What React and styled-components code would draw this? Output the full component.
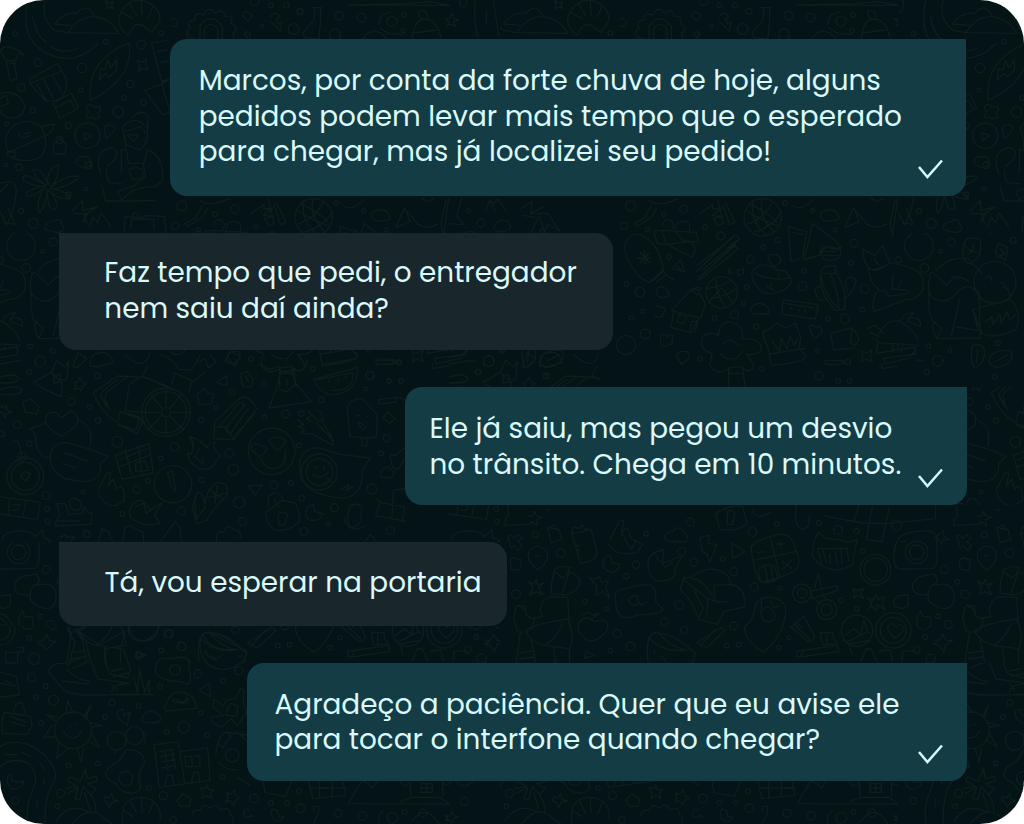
import React from "react";
import styled, { createGlobalStyle } from "styled-components";

const GlobalStyle = createGlobalStyle`
  body { margin: 0; background: #ffffff; }
`;

const Screen = styled.main`
  display: grid;
  width: 1024px;
  height: 824px;
  overflow: hidden;
  border-radius: 44px;
  background: #041316;
`;

const Wallpaper = styled.svg`
  grid-area: 1 / 1;
  width: 1024px;
  height: 824px;
  fill: none;
  stroke: #0e1e1f;
  stroke-width: 4;
  stroke-linecap: round;
  stroke-linejoin: round;
`;

const Thread = styled.section`
  grid-area: 1 / 1;
  z-index: 1;
  display: flex;
  flex-direction: column;
  gap: 37px;
  box-sizing: border-box;
  padding: 39.3px 57.3px 0 59px;
`;

const Bubble = styled.article`
  display: flex;
  justify-content: space-between;
  box-sizing: border-box;
  width: ${(p) => p.$width}px;
  height: ${(p) => p.$height}px;
  margin-right: ${(p) => p.$inset || 0}px;
  align-self: ${(p) => (p.$sent ? "flex-end" : "flex-start")};
  padding: ${(p) => p.$top}px ${(p) => 24 - (p.$inset || 0)}px 17px ${(p) => p.$left}px;
  border-radius: ${(p) => (p.$sent ? "17px 0 17px 17px" : "0 17px 17px 17px")};
  background: ${(p) => (p.$sent ? "#143c44" : "#19262b")};
`;

const Message = styled.p`
  margin: 0;
  color: #d9f9fc;
  font-family: Poppins, Inter, "Open Sans", sans-serif;
  font-size: 27.88px;
  font-weight: 400;
  line-height: 35.7px;
  white-space: nowrap;
`;

const Line = styled.span`
  display: block;
`;

const Check = styled.svg`
  flex: none;
  align-self: flex-end;
  width: 25px;
  height: 20px;
  fill: none;
  stroke: #d3f8fb;
  stroke-width: 2.5;
`;

const messages = [
  {
    sent: true, width: 796, height: 157, top: 23.6, left: 29, inset: 1,
    lines: [
      "Marcos, por conta da forte chuva de hoje, alguns",
      "pedidos podem levar mais tempo que o esperado",
      "para chegar, mas já localizei seu pedido!",
    ],
  },
  {
    sent: false, width: 554, height: 117, top: 21.6, left: 45.3,
    lines: ["Faz tempo que pedi, o entregador", "nem saiu daí ainda?"],
  },
  {
    sent: true, width: 561.5, height: 117.5, top: 23.8, left: 24.3,
    lines: ["Ele já saiu, mas pegou um desvio", "no trânsito. Chega em 10 minutos."],
  },
  {
    sent: false, width: 448, height: 84, top: 23.6, left: 45.5,
    lines: ["Tá, vou esperar na portaria"],
  },
  {
    sent: true, width: 720, height: 118, top: 23.8, left: 27.8,
    lines: ["Agradeço a paciência. Quer que eu avise ele", "para tocar o interfone quando chegar?"],
  },
];

// Each sheet of doodles is drawn at three times its size, from its own origin.
const sheets = [
  {
    at: [0, 0],
    dots: [[317,125,7],[114,188,11],[246,204,14],[424,134,13],[64,262,11],[243,270,6],[391,252,11],[430,307,8],[98,330,8],[355,336,16],[372,294,7],[262,407,38],[205,377,9],[57,502,10],[265,496,10],[18,495,5],[258,567,5],[205,584,8],[63,633,8],[100,670,15],[407,645,8],[46,102,7],[484,100,7],[20,372,6],[178,420,10]],
    paths: [
      "M84 0Q58 110 130 154Q220 205 292 132M136 0Q120 52 163 91L204 98M98 50Q104 102 139 127M150 140Q190 165 238 144",
      "M204 98Q235 48 284 50Q334 58 356 100ZM164 72Q188 36 230 40Q262 4 284 50M164 72L214 76",
      "M385 107Q343 75 362 38Q390 -12 440 5Q482 26 480 62L455 98L435 82Q408 55 385 107M365 37L398 55M390 12L410 48M424 2L426 45M460 15L444 53",
      "M271 301Q257 180 388 128Q402 240 271 301M298 239L301 207L316 209L322 181L333 203L349 180L349 211L327 231L318 220L298 239",
      "M411 180L426 187L439 178L436 196L445 208L426 207L416 214L419 197ZM316 0L328 10L341 5L335 16L342 25L328 21L319 27L321 14Z",
      "M89 237L172 191L190 220Q214 262 180 298L139 305L91 252ZM94 249L185 213M111 253L139 302M132 239L159 294M157 225L184 275M160 309L214 279L236 324L179 355ZM169 322L211 301L225 324",
      "M0 151Q26 124 72 165L55 160L47 180L20 183L0 151M19 186L31 242L51 235L40 180M34 190L48 191",
      "M0 280Q58 267 75 320Q66 360 25 353Q0 342 0 330M0 296L19 286L25 310L0 320",
      "M24 452Q5 410 40 378Q80 350 123 379Q151 434 123 470Q85 492 34 474M17 462L144 403M125 379Q150 372 164 374Q158 388 142 405M57 396Q57 424 89 407M70 402L92 398M24 454L45 456L47 470L23 468Z",
      "M262 316Q276 310 281 321Q306 317 301 333Q288 340 300 352Q282 362 274 351Q257 360 260 343L267 334Q254 326 262 316M251 398L254 421L276 406Z",
      "M313 380Q328 369 345 381Q348 392 318 416ZM230 481Q240 462 250 472Q274 464 270 482Q282 500 262 500Q246 508 240 498Q222 490 230 481M160 432L180 417L199 433L195 462L161 462Z",
      "M139 557Q104 530 98 511Q124 500 142 549Q142 506 175 494Q176 534 155 559Q190 528 226 528Q250 531 215 548Q190 564 158 566Q196 576 209 590Q221 603 178 592Q160 586 151 574Q172 600 171 623Q163 636 147 619L140 576Q138 616 119 640Q106 610 130 567Q98 590 78 588Q76 568 129 560Q92 558 72 541Q61 524 87 528ZM131 558L145 550L156 562L143 575Z",
      "M367 382Q403 340 441 382Q449 433 416 450L379 434ZM376 395L421 380L437 397M397 353Q424 322 444 350L443 388M381 405L416 404L402 424ZM376 432L386 490L432 489L442 450M362 450L376 450M442 450Q490 462 488 540Q465 568 443 559L399 571L364 600L354 575L402 557L437 529L430 493M364 450L364 519M303 522Q276 453 335 442Q362 452 345 478L322 500M319 510Q320 540 330 548L364 551M385 508Q405 498 428 508L429 536L397 539ZM306 558L318 603L465 602",
      "M453 130L500 121M455 131L485 243L506 238M472 155L503 149M480 187L506 183M434 271L486 252L510 338L488 344ZM485 250L510 238",
      "M0 550Q55 530 48 585Q42 636 20 675L0 634M0 577L24 552M25 625L45 673L13 668M14 0Q22 34 0 38",
      "M216 633L247 602L250 631L292 620L252 646L260 670M221 641L263 641L248 665M267 682L280 650L292 668L304 639L332 680M372 694L375 650L425 654L440 646L493 650L498 695M392 684L394 658L461 658L462 690M135 688Q134 666 160 665Q178 648 187 675Q202 693 171 698Z",
    ],
  },
  {
    at: [160, 0],
    dots: [[284,4,13],[332,16,7],[379,16,8],[401,87,16],[307,78,5],[420,34,9],[538,47,13],[605,53,13],[525,104,17],[732,44,7],[730,92,6],[910,8,11],[263,103,8],[696,64,15],[40,68,12]],
    paths: [
      "M100 116Q80 112 81 101Q78 92 92 84Q74 64 105 60Q100 34 131 45Q147 14 166 40Q190 20 195 49Q222 44 214 72Q240 82 218 102L222 116M120 116V78Q152 33 187 79V116M133 116V86Q153 60 174 86V116",
      "M246 47L257 34L277 45L265 64ZM331 50Q345 31 359 49L349 59L355 72L367 64L361 92L332 65M465 22L461 62L429 99L434 112L476 118L481 75L482 24M456 23H485",
      "M565 15L870 16L807 5L737 11L565 15ZM655 74L666 44L690 37M660 84L687 101L729 102M610 115Q640 70 680 116M757 115Q763 55 797 57Q830 60 844 114M762 99L828 90M776 36Q800 22 802 54Q780 68 776 36M856 57L869 56L875 40L883 58L897 58L881 67L888 80L873 73L862 76L868 66ZM945 0Q940 70 955 115M1001 0Q1010 75 1018 110M980 32L978 75",
    ],
  },
  {
    at: [600, 180],
    dots: [[92,78,15],[192,102,7],[251,87,12],[72,138,11],[143,149,6],[315,142,7],[488,112,56],[555,70,7],[638,92,6],[533,180,7],[490,202,7],[362,168,12],[451,238,11],[207,230,7],[762,190,12],[753,249,7],[705,150,6],[990,129,12],[953,92,6],[1054,186,12],[1022,214,6],[896,239,9],[957,198,43],[973,264,13],[612,273,7],[607,318,13],[440,322,7],[365,337,47],[119,336,14],[79,313,7],[128,394,6],[95,413,7],[136,462,15],[344,414,7],[403,404,12],[430,370,6],[469,440,8],[794,327,13],[787,388,7],[734,416,14],[683,416,7],[652,512,5],[657,587,13],[714,603,7],[749,603,7],[743,546,8],[485,566,7],[300,537,7],[985,499,7],[1013,543,16],[980,576,8],[1050,511,6],[1194,490,7],[1184,590,7],[1240,181,9],[1185,307,63],[1174,153,7],[78,495,29]],
    paths: [
      "M146 61Q178 85 234 55M155 75L134 113L102 131L111 139L155 111L169 85M300 101L338 74L339 87L366 84L336 107L368 109L340 116L354 136L370 131L352 56M377 69L405 127L389 134L369 74",
      "M450 73Q500 93 532 127M436 90Q490 125 534 137M459 61Q448 127 499 163M488 54Q470 100 521 156M443 132Q489 117 518 67M463 155Q520 140 544 95",
      "M565 140L620 155L608 231L573 245ZM578 157L611 164M612 240L638 130L708 183L723 204L701 207L666 196L659 225L612 240M665 225Q661 192 710 205L721 211Q730 241 687 241Q664 239 665 225M668 214H710M670 226H716",
      "M578 78Q605 95 639 58M662 110Q658 92 682 91Q704 84 713 104Q728 121 691 123Q667 126 662 110M734 143L761 82L777 125L734 143M769 95L801 133Q835 150 861 131M813 55L830 66L848 56M893 55L878 166L870 133L885 60M932 54L917 106L936 134L895 131",
      "M1005 91L1016 59L1029 71L1040 57L1067 94M1015 60L1033 92M1028 147Q1034 118 1060 121Q1077 120 1079 142Q1055 165 1028 147M1110 85L1142 65L1141 96L1180 80L1137 101L1190 100L1226 153L1190 132L1181 158L1165 108L1141 156M1114 106L1155 112",
      "M82 176Q98 160 121 164Q179 190 190 269L150 307Q120 300 106 275Q59 215 82 176M133 210L135 254M112 235H151M120 216L149 249M147 219L120 248M158 303L190 273L198 284L220 299M169 307L198 285M217 266L242 240L255 275ZM232 258L247 274",
      "M161 152L185 151L199 193L171 190ZM185 151L289 157L295 186L248 182L225 151M189 136Q188 118 207 119Q230 130 215 148M226 149Q225 120 256 124Q273 128 268 151M201 193L274 231Q296 211 274 185L201 193",
      "M288 276L399 169Q418 164 417 179L292 300M292 256L393 177M297 292L404 197L416 205L299 300M305 273L411 181M385 265L396 278L386 281ZM413 270L431 266L430 281L414 288Z",
      "M456 275Q487 237 530 270Q569 269 574 308Q544 350 490 338Q451 307 456 275M461 278Q520 306 569 293M503 235Q510 218 531 225Q556 239 523 261L503 235M484 288L489 293M514 310L514 329M534 280L537 290M500 320L523 331",
      "M331 356Q377 350 410 325M321 325Q366 321 394 300M350 297Q344 337 375 378M325 369L365 323L399 369",
      "M271 331L215 392L302 414L316 371L292 327ZM222 391L212 442L275 458L295 414M275 331L293 345L302 325Q292 316 275 331M236 404L260 410L252 431L231 425ZM270 451L275 424L295 424L284 456",
      "M450 391Q465 359 499 377Q510 389 506 402H459ZM550 359L655 374L646 417L545 402ZM556 370L642 384M572 382L576 389M594 387L599 394M613 390L619 397",
      "M665 280Q661 253 707 258L705 281L665 280M663 286Q676 354 715 384M690 278Q716 336 717 389M707 278Q743 329 733 389L706 391Q654 334 663 286M733 357Q765 332 769 300Q747 278 736 309L742 336M661 319Q644 321 645 334Q660 377 681 354",
      "M788 208L825 227L848 196L868 244Q870 256 825 272Q793 268 788 208M868 248Q928 256 962 280Q974 300 968 332Q950 360 919 358L821 395Q813 350 837 331Q862 330 866 348Q900 348 928 336M806 267Q808 296 820 312L838 331M880 284L875 327L922 331M903 303L896 322M825 240L836 255M816 271L850 259M1092 189Q1103 164 1143 180L1140 224L1113 252Q1080 247 1092 189M1094 195L1114 218L1121 195M1106 224L1113 209L1135 219",
      "M1009 272Q1044 229 1103 235L1147 282M991 279Q998 271 1039 317L1061 291Q1090 290 1107 305M991 279Q974 347 1007 357Q1041 377 1073 334Q1105 305 1137 339L1141 474L1010 476Q987 432 1009 424M987 334Q984 415 1003 427L1024 445L1010 476M1079 359L1054 467M1118 391L1135 451L1068 441M1211 321Q1237 330 1226 361M1156 294Q1172 280 1176 304M1202 307L1216 315M1118 389L1231 359Q1268 397 1248 449Q1176 481 1146 459L1118 389M1156 426L1176 410L1178 433L1201 402L1203 432L1222 394L1228 419L1248 404",
      "M169 378L198 386L184 412L164 409M181 473Q184 454 201 470Q225 453 216 478Q220 496 205 495Q180 506 182 478M229 529Q233 510 253 515Q267 510 268 535L245 553ZM173 339Q164 323 183 320Q204 322 208 347Q185 360 170 345M355 467Q359 422 396 426Q433 440 427 476Q488 472 483 512Q467 526 439 523Q482 568 439 573L422 559L388 564Q347 591 329 553L337 520Q294 511 308 469Q331 450 355 467M370 490Q394 471 416 497M361 520Q376 541 399 535M427 515L404 541M386 562V620M427 562L435 620M387 580H425",
      "M490 455L509 446L531 429L556 444L587 430L602 470L598 506L618 526Q623 545 514 557L503 499Q488 473 490 455M511 522L615 505M517 485L540 515L543 474L561 507L570 467L583 496L593 473M644 476Q620 436 633 434L652 443L662 437L667 456ZM692 460L751 444Q771 449 776 480L762 504L701 510ZM755 450L751 488L763 495",
      "M803 445L826 436L850 460M810 457L837 469M816 474L834 482L829 520L945 501L947 522L850 535L855 551L927 535L948 509M835 488L957 496M835 467Q857 414 899 424Q945 450 953 482M902 425Q908 397 941 399L923 418Q964 403 961 439L923 423M877 495L881 515M893 493L894 510M903 516L910 493M951 542L971 543M845 550L846 566L892 558",
      "M784 513L799 521L815 510L810 529L817 544L797 537L785 546L789 530ZM675 541H729Q736 549 722 553H676ZM1118 496Q1161 486 1152 533Q1143 562 1122 563Q1107 535 1118 496M1133 508L1129 547M1168 541Q1174 507 1233 512Q1248 550 1193 562Q1170 562 1168 541M1188 543L1225 524M1185 219L1195 190L1224 202L1217 241ZM1192 232L1215 221L1199 205",
    ],
  },
  {
    at: [0, 340],
    dots: [[120,64,16],[88,97,8],[160,33,7],[292,107,8],[214,185,11],[269,201,7],[52,254,12],[5,281,9],[294,242,8],[352,305,16],[88,311,8],[66,350,13],[76,409,55],[76,409,42],[524,321,13],[482,355,7],[498,217,73],[498,217,62],[498,217,14],[603,241,8],[696,156,8],[648,203,6],[792,133,7],[857,222,12],[904,221,8],[793,232,7],[964,179,8],[1109,106,12],[938,86,7],[1098,146,6],[688,340,13],[700,389,16],[815,334,70],[519,433,56],[897,316,7],[958,396,54],[958,396,40],[1160,295,11],[1143,340,7],[822,435,12],[873,429,7],[905,475,8],[718,487,17],[727,545,12],[410,449,11],[443,423,7],[249,457,6],[139,467,12],[367,522,7],[544,513,12],[260,583,10],[143,545,7],[142,507,7],[1003,503,12],[1115,447,15],[1171,571,12],[1227,574,7],[912,575,12],[985,553,6],[1167,124,6],[1203,123,7],[1199,67,7],[605,420,7]],
    paths: [
      "M219 78L234 38L260 56L229 85ZM272 78Q268 50 285 42Q327 26 340 67L293 81ZM374 43Q434 100 449 40M443 78L428 110L513 143M480 43Q521 57 536 88L575 90L600 47M516 131L524 98L581 125L615 97M575 123L566 159M588 69L615 56L626 84L649 66L630 43M675 62L691 35L720 48L706 76Z",
      "M105 125L154 97L187 128L184 170Q117 145 101 122ZM154 98L170 61L194 81L206 65L200 119L187 120M161 105L181 104L181 126L163 129ZM222 128L232 126L240 111L247 127L261 130L247 139L244 153L235 144L222 149L229 137Z",
      "M290 179Q277 158 282 157L352 108L441 112L516 150M321 200L301 164Q325 134 355 118M330 209Q307 178 320 156L382 111M415 114L388 132L376 213M290 179Q307 218 350 246M360 214L354 253L412 281L429 241ZM364 215L420 232L408 270L359 254M430 218L381 213M498 144V199M498 236V290M425 217H480M512 217H570M449 159L485 204M545 163L509 206M444 270L487 225M550 270L510 228",
      "M591 161L614 145L621 158L641 163L634 191L598 194ZM650 128L680 106L681 137ZM720 102L741 94L761 118L753 142L728 139ZM736 108L746 127M644 245L723 172Q747 165 770 205L702 298L641 297Q644 266 644 245M659 260L719 187L735 193L677 265M704 286L768 217M675 269L690 282L745 205M641 263L675 260L702 298",
      "M785 71Q802 99 834 78L843 95L827 152L807 204L935 185L888 132L875 87Q914 106 922 61M843 95L875 93M836 149L861 155L886 132M861 116L862 136M941 118L1073 82Q1075 166 986 164Q956 154 941 118ZM952 119L1058 98Q1065 155 995 151M985 120L989 127M1014 117L1014 127M1034 107L1039 115",
      "M69 186L92 177L117 199L110 222L75 216ZM0 197L15 206L18 196L23 211L35 217L19 220L14 236L9 218L0 216M136 244Q138 211 169 218L184 233L213 213Q243 224 228 258L185 289Q141 266 136 244M136 250L91 266L106 283Q106 316 114 330Q126 355 147 353M237 240Q285 264 269 318M151 352Q149 311 198 307L276 329L324 350L302 370Q305 421 254 425L197 417Q151 396 151 352M190 337L262 363M190 370L227 384M41 307Q52 289 60 323L64 345M58 351L82 350M76 394L92 402L77 423L61 410Z",
      "M346 346L447 311L460 399L366 418ZM358 360L442 326M354 382L447 346M376 330L396 406M415 318L426 402M407 370L435 362L447 391L407 394ZM563 339L574 342Q588 318 569 291Q600 296 621 324Q630 304 646 307Q634 322 655 341Q665 341 650 361Q640 389 606 389Q563 369 563 339M600 324L584 350L610 371L607 353M755 330Q747 301 791 318Q814 327 777 350ZM807 304Q825 280 854 299Q862 312 830 332ZM785 357Q792 386 820 386Q850 384 856 354V330M512 438L508 415L502 400L516 391L528 455L512 438",
      "M907 247L891 238L911 254L895 260L915 269L904 281L937 282L1000 317L994 289L968 246L965 217L950 211M926 213L935 226L919 235L937 247M931 219L957 245L970 237M947 247L1001 302M1042 203Q1049 174 1088 176L1131 224L1130 288Q1119 300 1050 289ZM1072 226H1079M1101 228H1107M1075 246Q1096 255 1096 263Q1085 276 1075 246M1086 291V316Q1095 323 1101 316V291M1149 235L1164 215L1176 228L1187 237L1175 242L1171 254L1164 244Z",
      "M294 450L322 398L333 400L325 438L340 417L350 447L361 438Q376 450 373 482L348 497Q303 498 294 450M390 514Q391 484 426 479L451 510L487 488L463 525L480 550Q440 560 419 548Q382 535 390 514M407 500L431 489L438 520L457 508M577 500L591 459Q604 448 616 492Q620 440 655 427L679 434Q684 456 678 474Q650 490 621 540L590 552ZM584 472L588 538L618 500M615 473L652 468L679 458M630 452L670 476M652 436L645 489M745 438L786 435L767 465ZM805 500Q799 457 829 459Q850 468 848 481L885 489Q900 515 899 545Q856 582 817 567Q796 540 798 516L848 481M837 501L822 478M834 527Q844 509 863 522L854 553L837 556ZM923 501L941 493Q936 521 969 520Q964 547 927 540Q909 525 923 501M1048 501Q1069 482 1086 503L1082 545L1061 562Q1044 569 1043 527ZM1033 531Q1041 584 1097 558",
      "M900 390Q891 330 952 323L1021 343L1110 354L1086 391Q1091 466 1030 475Q900 464 900 390M945 382H952M972 377V387M937 403Q962 422 985 397M980 413L998 429M1022 448L1046 434L1040 451L1060 439M1171 345L1188 346L1220 318M1170 349L1178 382L1193 388L1213 360M1143 412Q1139 385 1163 380L1183 396L1175 413ZM1129 476L1142 485L1126 527L1260 551M1141 487L1260 510M1185 450L1218 446M1180 451L1176 530M1218 490L1207 544M0 470L121 487L112 538L0 522M29 479L24 527M77 484L68 532M37 495L59 493L53 510L35 511",
      "M167 558Q166 534 180 529L171 492L195 490L207 523L248 521L251 500L267 520L276 518L273 553ZM208 486Q214 470 232 478Q253 492 236 512L212 506ZM170 543H237M182 590L197 585L203 593L223 589L209 611M295 608L306 565L324 574L340 610M368 602L376 563L391 557L429 578L431 607M482 604L526 544L540 562L545 604M650 605Q646 568 671 577Q682 548 700 568Q726 570 720 595M6 600Q10 574 63 572Q98 574 106 590L128 570L131 593L154 602L134 616Q136 640 128 654M1095 606L1111 583L1129 604",
      "M0 8H52M0 22L55 29L51 44L0 53M0 72L63 61M0 112Q52 95 56 119Q49 132 0 128M0 149Q56 131 67 151Q61 169 0 163M960 43L966 74L1070 56L1070 39M1129 60Q1130 52 1179 60L1179 73H1133M1135 179L1188 172L1187 186L1139 192ZM1189 172L1223 181",
    ],
  },
  {
    at: [500, 490],
    dots: [[106,134,9],[182,189,13],[254,335,7],[319,357,6],[379,259,8],[48,313,13],[438,131,7],[408,224,11],[545,184,12],[582,217,12],[538,345,13],[494,396,12],[553,420,11],[391,469,13],[351,431,12],[331,482,7],[571,96,12],[668,207,7],[701,245,12],[763,291,12],[701,408,12],[680,467,7],[716,464,7],[757,126,13],[841,295,6],[837,473,7],[867,443,6],[906,310,28],[980,359,30],[906,310,14],[980,359,17],[1089,184,7],[1127,239,46],[1127,239,35],[1070,357,7],[1023,331,7],[1180,421,53],[1180,421,39],[1071,422,47],[1276,441,7],[1314,379,7],[1345,403,12],[1372,275,7],[1333,239,12],[1250,187,34],[1250,187,22],[1190,106,15],[1014,120,13],[1069,124,8],[1250,479,10],[1292,506,14],[956,99,7],[830,103,7]],
    paths: [
      "M143 113L177 119L185 149L153 158ZM147 112L163 105L170 119M23 143Q28 128 42 146Q56 126 66 144L53 156Q76 166 55 181L43 166Q26 184 31 159ZM114 240Q79 217 86 187Q111 151 141 185Q149 217 114 240M107 197H118M215 130L222 111L240 116L243 103L260 120L273 119L292 189Q283 218 241 219ZM214 132L273 119M224 166L240 168M230 182L240 181M329 150L360 90L371 92L365 126L382 112L393 146L428 164L410 188Q346 201 327 164M365 127L393 180L409 150M444 217Q449 185 491 180L488 220L548 197L523 241Q535 273 469 273Q442 255 444 217M470 202L497 232L517 216",
      "M308 225Q309 196 331 197L337 219L359 221Q359 242 334 247Q312 241 308 225M30 212L39 203L64 210L59 241L34 238ZM86 275L102 283L109 268L113 285L131 279L116 294L128 314L109 305L89 314L99 292ZM269 262L289 268L298 257L304 278L325 272L318 292L329 325L308 304L288 316L291 290Z",
      "M494 144Q495 125 519 125Q531 101 552 127Q567 138 559 156L502 153ZM600 142L628 136L624 160L651 163L629 215L620 190L607 185ZM696 159L735 185L698 206ZM753 172Q760 152 830 134Q874 126 884 170Q910 226 882 244Q800 280 780 274Q762 250 753 172M812 144L840 260M759 211L886 185M771 188L792 185M830 162H854M841 150L843 175M846 214L876 236M874 211L849 237M775 242Q791 216 824 229L834 263Q809 287 781 274ZM795 230L804 276M814 230L818 270",
      "M647 73Q682 43 728 49L741 99Q717 126 660 119ZM682 65Q697 55 705 71L697 104L682 103ZM759 60Q765 96 811 68M889 42Q880 101 903 119Q935 116 926 76M955 128Q934 160 938 201Q990 265 1057 224Q1062 190 1071 150L1044 156L1015 149L978 145ZM953 177L964 218M967 174L979 218M990 190V223M1007 189L1013 225M1023 174L1026 222M1042 177L1046 213M953 176L1042 175M972 77L1000 83L1086 99L1161 101L1307 86V43M1077 45L1060 97M1117 49L1099 148L1146 156L1168 52",
      "M1182 190Q1188 142 1210 134Q1250 120 1286 123Q1312 128 1310 144L1312 196Q1312 234 1296 236L1202 237Q1178 236 1182 190M1203 155H1217M1304 143L1318 133L1329 121L1331 137L1346 149L1329 149L1324 164L1316 149Z",
      "M345 313Q350 296 438 284Q471 284 467 334L489 360Q475 375 412 374Q360 400 349 354ZM385 330Q397 311 413 319L415 342Q395 355 385 330M411 329L422 345L439 337M541 298L551 264L569 262Q612 235 634 237Q690 243 691 282Q736 290 736 350L673 364L652 403L596 388L576 338ZM551 269L624 326L646 334Q640 310 644 286L691 283M582 302L610 355L596 384M624 328L620 382M648 335L679 336M574 264Q614 270 639 324M245 375L266 366L279 376L297 369L278 386M235 399Q258 370 282 395Q334 382 321 419Q298 458 262 452Q228 428 235 399",
      "M155 278L163 243L188 265L206 249L185 314L153 310ZM188 228L163 239M186 230L211 232L202 248M209 247Q228 250 239 268Q241 298 209 311L188 316M127 379Q116 360 123 350Q130 320 160 320L203 323L207 387M42 379L48 350L75 347L80 377L96 386L127 379M54 344L78 363M41 382L52 425Q84 430 97 416L104 383M77 421Q110 400 205 387L218 439L209 476L160 470Q90 462 77 421M61 430L48 517M92 441L107 517M160 469L166 517M208 478V517M58 489L98 483M60 507L101 501M135 465Q170 446 186 402M253 504L259 483L284 497Z",
      "M444 515Q436 440 462 428Q500 430 531 447Q568 473 586 488L578 518M445 443Q494 490 553 480M474 425Q500 466 558 481M463 478V490M482 498L496 511M589 459L662 413L675 421L620 474ZM601 468L646 418M790 487Q733 451 733 411Q762 389 767 344Q778 323 804 320Q846 326 857 352Q857 434 790 487M782 367Q804 336 822 366Q829 385 814 394Q787 402 782 367M784 333V356M812 330L822 352L839 348",
      "M872 411L912 379L944 440Q937 456 924 454ZM890 400L910 414M884 404L930 447M944 294L955 250L967 302M929 304L1011 287L1015 301L935 326ZM938 323L963 343M966 309L979 329M889 484L1014 466L1016 484L893 502ZM903 496L913 480M961 427L999 428L1001 448L1013 461L968 465ZM980 434V461M1032 438L1062 416L1081 434L1092 391L1103 427L1116 432M1038 458L1099 427M1056 493L1046 462L1107 451M1083 515L1098 477L1114 477L1131 515M1184 444Q1150 412 1172 402Q1184 400 1188 412Q1204 396 1210 412Q1210 430 1184 444",
      "M1057 295L1070 302L1091 295L1083 308L1090 325L1073 316L1062 325L1064 308ZM1102 323L1118 333L1128 311L1136 330L1153 320L1147 340L1154 359L1132 344L1128 363L1115 347L1106 359L1115 340ZM1181 332L1197 317L1225 315L1224 346L1207 356L1184 350ZM1237 293Q1238 263 1269 258L1302 251Q1317 266 1307 285Q1367 271 1362 330Q1353 367 1313 351Q1279 337 1285 313Q1244 321 1237 293M1286 311Q1284 288 1307 281M1250 385L1261 362L1268 379L1291 381L1293 407L1275 420L1252 411ZM1302 450L1318 451L1328 432L1338 451L1358 451L1337 464L1331 486L1318 467L1298 461L1314 458ZM1206 515L1209 484L1246 481M1138 483L1169 479L1178 515",
      "M15 108Q14 80 26 78L22 45M13 106L92 103L95 94L112 107L110 88L127 82L108 76L104 64L96 80L84 78M144 60H150",
    ],
  },
  {
    at: [0, 600],
    dots: [[103,176,17],[158,76,12],[128,50,7],[88,114,7],[95,233,12],[137,259,7],[108,291,7],[160,301,15],[336,308,9],[416,318,7],[484,151,7],[508,102,12],[546,140,12],[480,259,7],[415,167,9],[594,222,12],[716,212,12],[669,243,7],[551,382,17],[602,338,7],[621,405,7],[500,395,7],[350,422,28],[404,407,27],[315,351,7],[124,369,7],[206,497,7],[293,490,7],[377,535,21],[447,564,7],[490,587,12],[172,619,7],[182,580,12],[46,602,10],[667,531,7],[761,594,12],[742,640,12],[519,660,10],[219,391,55],[697,466,20],[525,210,16],[84,67,21],[0,90,45],[0,90,30]],
    paths: [
      "M17 157H53V189H17ZM53 142H71V156H53M67 37Q81 25 83 55M111 126L130 122L140 104L148 122L168 124L153 136L138 152L132 137L115 132M0 216L49 229L58 285L0 291M0 250L47 258M15 242L34 250",
      "M209 78V105L226 124L207 193Q150 182 147 216Q176 260 206 278L246 285L460 284L346 284M335 276Q338 252 388 250L294 237L269 175L257 120L226 88M201 208Q230 240 271 244L261 252L188 243M215 184L258 167M217 204L266 184M226 88L299 135L372 95L378 136L319 145Q305 177 330 222L382 234L392 210L369 148M335 213L372 205M343 229L385 219M335 253L351 270M401 229L413 277L418 207L434 276L448 239L447 280M409 154L437 163L412 180Z",
      "M386 79Q378 123 434 122Q467 126 475 80M600 145Q600 94 622 98Q680 96 723 147Q744 150 740 163Q730 190 716 192Q700 206 671 209Q610 205 600 145M610 104Q630 156 712 148M636 102L705 136M620 158Q632 191 669 164M716 168H727M465 217Q466 190 479 178Q500 174 515 176Q550 166 560 176Q574 186 566 206Q580 240 562 253Q540 242 510 243Q467 229 465 217M597 272L626 249L632 290ZM494 324Q506 283 529 276Q584 275 591 325L498 333ZM518 304Q519 288 539 304Q554 311 562 293Q570 313 541 309L518 304",
      "M14 336L92 350L96 378L82 403L8 400Q3 346 14 336M40 335Q46 304 68 308L78 347M30 349L80 366M30 365L75 378M198 341L203 303L219 336M167 363L140 344L169 352M157 375L132 412L163 411M176 432L170 475L203 447M232 447L243 486L251 445M266 423L298 441L274 401M275 381L306 377L269 367M253 348L272 316L257 355M189 391Q219 437 246 392M207 378H211M228 374H232M351 333L369 328L372 348L391 335L382 375Q350 362 351 333M426 358Q433 332 456 333L478 343L483 360Q470 372 444 368Q426 368 426 358",
      "M336 447L346 450L344 458M377 412L380 394M427 401L438 401L434 428M0 440Q50 412 110 446Q177 497 164 541Q132 584 136 671M0 501Q42 464 93 495Q117 533 99 567Q75 621 84 671M15 464H50M64 456L94 471M121 490L133 509M134 535L131 550M113 598L111 620M25 525Q35 520 34 539Q56 552 72 543Q70 568 35 567Q17 554 25 525",
      "M317 519Q320 504 346 490Q368 474 376 450Q430 444 434 489Q418 510 416 539Q432 570 404 578Q362 584 346 549Q319 541 317 519M462 434L534 425L540 455L623 443L630 541L478 562ZM479 455L520 448M481 469L525 463M483 486L525 479M486 504L526 496M494 451L504 512M516 447L527 507M540 456L554 550M554 469H575L577 500H558ZM584 468L599 467L600 499L583 500M495 557L501 527L517 525L522 553M575 546L580 517L595 516L598 542",
      "M197 565L232 560L203 543L209 531L241 544L257 506L261 535L289 530L291 543L263 552L289 565L272 585L250 559L239 600L224 596L236 563L202 580M264 574Q291 606 287 636M254 577L270 629M167 666Q194 619 237 626L274 638M218 671Q267 609 313 656L335 671M314 590L327 594L335 580L339 598L354 603L337 607L328 622L323 607L311 602ZM599 563L616 566L620 554L626 569L641 568L631 580L637 595L620 587L606 594L609 578ZM680 577L691 584L704 570L707 588L722 594L706 601L701 615L690 602L677 606L684 592ZM531 602L548 581L573 597L567 618L542 619ZM669 318Q679 295 708 295L721 265L733 270L730 304L740 337L712 377L694 356L665 381Q631 371 633 352L671 347L640 322L642 296L669 318M692 310L714 318L709 349L676 345ZM648 462Q650 416 675 396L742 405M657 434L669 443L692 408L678 396M738 420L710 396M656 486Q671 509 710 510M713 532L753 558L752 527M369 671Q360 614 392 598Q430 584 462 604Q486 630 480 660M372 632L398 650M392 604L410 640M424 596L426 638M460 606L446 642M576 650Q574 626 600 632Q612 606 630 624Q652 606 662 630Q690 616 690 644Q706 650 698 668",
    ],
  },
  {
    at: [240, 774],
    dots: [[42,73,13],[92,87,7],[177,52,8],[181,103,13],[141,87,7],[294,118,12],[367,125,13],[457,131,16],[494,114,7],[673,82,12],[809,60,13],[549,117,12]],
    paths: [
      "M69 21L75 56L137 67L155 22M207 24L218 74L317 64L310 25M209 42H318M239 24V69M277 24V65M365 21L325 89L629 90L599 70L514 70L482 83M512 28V65M608 28V66M543 29H577V55H543ZM560 29V55M543 42H577M480 22Q496 49 511 21M607 24Q624 43 634 21M4 110L17 115L29 104L27 120L40 128L25 126L19 138L15 126L2 121ZM93 115Q97 98 113 112L117 129L132 128Q120 152 97 133L93 115M222 111Q215 91 236 98L236 116L221 147M417 145Q411 121 429 112M515 142Q557 86 595 148M615 126L630 126L637 112L643 126L656 128L640 135L637 147L628 138L617 139L623 132ZM650 22Q670 48 699 22M371 23L387 31L397 42L412 22",
    ],
  },
];

// The wallpaper repeats every 449px across; each visible band shows one sheet at its shifts.
const W = 449;
const bands = [
  { sheet: 0, clip: [0, 0, 170, 233], shifts: [0] },
  { sheet: 1, clip: [170, 0, 330, 40], shifts: [0] },
  { sheet: 0, clip: [500, 0, 119, 40], shifts: [W] },
  { sheet: 1, clip: [619, 0, 279, 40], shifts: [W] },
  { sheet: 0, clip: [898, 0, 126, 233], shifts: [W * 2] },
  { sheet: 2, clip: [600, 196, 298, 204], shifts: [0] },
  { sheet: 2, clip: [898, 233, 126, 154], shifts: [0] },
  { sheet: 2, clip: [170, 196, 430, 192], shifts: [-W] },
  { sheet: 2, clip: [0, 233, 60, 117], shifts: [-W * 2] },
  { sheet: 3, clip: [0, 350, 405, 193], shifts: [0] },
  { sheet: 3, clip: [405, 350, 195, 38], shifts: [0, W] },
  { sheet: 3, clip: [898, 387, 126, 118], shifts: [W * 2] },
  { sheet: 3, clip: [405, 505, 95, 38], shifts: [W] },
  { sheet: 4, clip: [500, 505, 524, 158], shifts: [0, W] },
  { sheet: 4, clip: [60, 626, 440, 37], shifts: [-W] },
  { sheet: 4, clip: [0, 543, 60, 83], shifts: [-W * 2, -W] },
  { sheet: 5, clip: [0, 626, 250, 198], shifts: [0] },
  { sheet: 5, clip: [898, 663, 126, 161], shifts: [W * 2] },
  { sheet: 6, clip: [250, 780, 250, 44], shifts: [0] },
  { sheet: 5, clip: [500, 780, 199, 44], shifts: [W] },
  { sheet: 6, clip: [699, 780, 199, 44], shifts: [W] },
];

const Sheet = ({ at, dots, paths, shift }) => (
  <g transform={`translate(${at[0] + shift} ${at[1]}) scale(.33333)`}>
    {dots.map(([cx, cy, r], k) => <circle key={k} cx={cx} cy={cy} r={r} />)}
    {paths.map((d, k) => <path key={k} d={d} />)}
  </g>
);

const Doodles = () => (
  <Wallpaper viewBox="0 0 1024 824" aria-hidden="true">
    {bands.map(({ sheet, clip, shifts }, i) => (
      <React.Fragment key={i}>
        <clipPath id={`band${i}`}>
          <rect x={clip[0]} y={clip[1]} width={clip[2]} height={clip[3]} />
        </clipPath>
        <g clipPath={`url(#band${i})`}>
          {shifts.map((shift) => <Sheet key={shift} {...sheets[sheet]} shift={shift} />)}
        </g>
      </React.Fragment>
    ))}
  </Wallpaper>
);

export default function App() {
  return (
    <>
      <GlobalStyle />
      <Screen>
        <Doodles />
        <Thread>
          {messages.map(({ sent, width, height, top, left, inset, lines }) => (
            <Bubble key={lines[0]} $sent={sent} $width={width} $height={height} $top={top} $left={left} $inset={inset}>
              <Message>
                {lines.map((text) => <Line key={text}>{text}</Line>)}
              </Message>
              {sent && (
                <Check viewBox="0 0 25 20" aria-label="Enviada">
                  <path d="M1 8L9.4 18L24 1.5" />
                </Check>
              )}
            </Bubble>
          ))}
        </Thread>
      </Screen>
    </>
  );
}
